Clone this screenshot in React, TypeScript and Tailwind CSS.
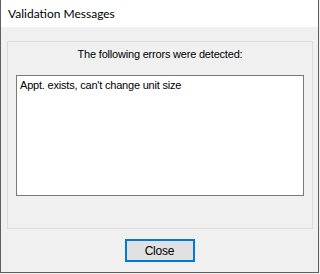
export default function App() {
  return (
    <div className="h-[274px] w-[320px] bg-[#f0f0f0]">
      {/* Dialog window */}
      <div className="flex h-[273px] w-[319px] flex-col border-x border-b border-[#5f5f5f]">
        {/* Title bar */}
        <div className="flex h-[27px] shrink-0 items-center bg-white pl-[7px] font-['Lato',sans-serif] text-[12px] text-black">
          Validation Messages
        </div>

        {/* Body */}
        <div className="flex flex-1 flex-col bg-[#f0f0f0] px-[6px] pt-[14px] font-['Liberation_Sans',Arial,sans-serif] text-[11px] tracking-[-0.2px] text-black">
          <div className="flex h-[188px] w-[306px] flex-col border border-[#dcdcdc] px-[8px]">
            <div className="mt-[6px] text-center leading-[13px]">
              The following errors were detected:
            </div>
            <div className="mt-[14px] h-[121px] w-[288px] border border-[#7a7a7a] bg-white px-[3px] pt-[3px] leading-[13px]">
              Appt. exists, can't change unit size
            </div>
          </div>

          <div className="mt-[10px] flex justify-center">
            <button className="h-[23px] w-[70px] border-2 border-[#0078d7] bg-[#e1e1e1] text-[12px] leading-none text-black">
              Close
            </button>
          </div>
        </div>
      </div>
    </div>
  );
}
